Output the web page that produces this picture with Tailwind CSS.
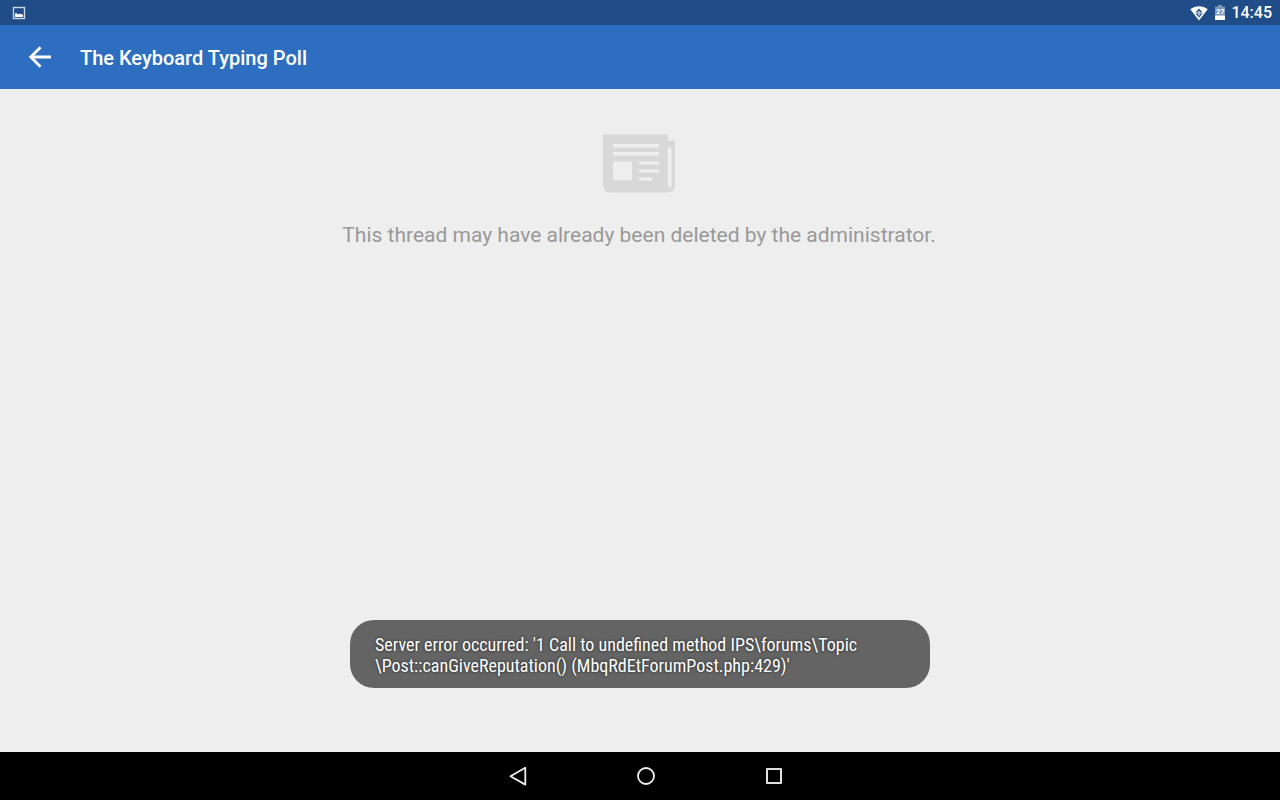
<!DOCTYPE html>
<html lang="en">
<head>
    <meta charset="UTF-8" />
    <meta name="viewport" content="width=device-width, initial-scale=1.0"/>
    <title>The Keyboard Typing Poll</title>
    <script src="https://cdn.jsdelivr.net/npm/@tailwindcss/browser@4"></script>
</head>
<body class="flex flex-col min-h-screen bg-[#eeeeee] font-['Roboto',sans-serif]">

<!-- status bar -->
<div class="flex items-center justify-between h-[25px] pl-3 pr-2 bg-[#204d87] text-white">
    <svg class="w-[14px] h-[14px]" viewBox="0 0 14 14" fill="none">
        <rect x="1.5" y="1.5" width="11" height="11" stroke="#cbd6e4" stroke-width="1.4"/>
        <path d="M3 11V7.500L4.500 7L6 8.500L8 7.500L9 8.500L10 8L11 9V11z" fill="#fff"/>
    </svg>
    <div class="flex items-center">
        <svg class="w-[18px] h-[16px]" viewBox="0 0 18 16">
            <path d="M9 15.5L.3 4.3C5.5.2 12.5.2 17.7 4.3z" fill="#fff"/>
            <path d="M5.5 7.5L9 3.5l3.500 4zM5.5 8.500h7L9 12.500z" fill="#204d87"/>
            <path d="M8 6h2v4.500H8z" fill="#a9bbd2"/>
        </svg>
        <div class="relative w-[10px] h-[16px] mx-[7px]">
            <svg class="w-[10px] h-[16px]" viewBox="0 0 10 16">
                <path d="M3 0h4v1.500h3V11H0V1.500h3z" fill="#7d97b8"/>
                <path d="M0 10.500h10v4.500H0z" fill="#fff"/>
            </svg>
            <span class="absolute inset-x-0 top-[3px] text-center text-[8px] leading-[8px] font-bold font-['Roboto_Condensed',Roboto,sans-serif]">27</span>
        </div>
        <span class="-ml-px text-base leading-6 font-medium">14:45</span>
    </div>
</div>

<header class="flex items-center h-16 px-7 gap-7 bg-[#2d6ec0] text-white">
    <button type="button" aria-label="Back">
        <svg class="w-6 h-6" viewBox="0 0 24 24" fill="none" stroke="#fff" stroke-width="2.8">
            <path d="M23 12H3M12.500 2.300L2.800 12l9.700 9.700"/>
        </svg>
    </button>
    <h1 class="pt-0.5 text-xl font-medium">The Keyboard Typing Poll</h1>
</header>

<main class="flex flex-col grow items-center justify-between pt-[45px] pb-16">
    <div class="flex flex-col items-center gap-[27px] pl-4 pr-[18px]">
        <svg class="w-[74px] h-[60px]" viewBox="0 0 74 60">
            <path d="M1 .5H66V6.500H73V51Q73 58.500 66 58.500H8Q1 58.500 1 51z" fill="#d8d8d8"/>
            <path d="M11 10H57V13.500H11zM11 18H57V21.500H11zM11 27.500H30V46.500H11zM37 27.500H57V30.500H37zM37 35.500H57V38.500H37zM37 43.500H50V46.500H37z" fill="#eee"/>
            <rect x="66" y="13" width="3.500" height="40.500" rx="1.500" fill="#eee"/>
        </svg>
        <p class="text-[21px] leading-7 text-center text-[#999999]">This thread may have already been deleted by the administrator.</p>
    </div>

    <div role="status" class="w-full max-w-[580px] px-[25px] pt-[14px] pb-3 rounded-3xl bg-[#646464] text-white text-lg leading-[21px] font-['Roboto_Condensed',Roboto,sans-serif] text-shadow-[0_0_3px_#000000bb]">
        Server error occurred: '1 Call to undefined method IPS\forums\Topic<br>\Post::canGiveReputation() (MbqRdEtForumPost.php:429)'
    </div>
</main>

<nav class="flex items-center justify-center h-12 pl-3 gap-26 bg-black">
    <button type="button" aria-label="Back">
        <svg class="w-6 h-6" viewBox="0 0 24 24" fill="none" stroke="#eee" stroke-width="1.8" stroke-linejoin="round">
            <path d="M19.300 3.800v16.800L4.500 12.200z"/>
        </svg>
    </button>
    <button type="button" aria-label="Home">
        <svg class="w-6 h-6" viewBox="0 0 24 24" fill="none" stroke="#eee" stroke-width="1.8">
            <circle cx="12" cy="12" r="8"/>
        </svg>
    </button>
    <button type="button" aria-label="Recent apps">
        <svg class="w-6 h-6" viewBox="0 0 24 24" fill="none" stroke="#e0e0e0" stroke-width="2" stroke-linejoin="round">
            <rect x="5" y="5" width="14" height="14"/>
        </svg>
    </button>
</nav>

</body>
</html>
